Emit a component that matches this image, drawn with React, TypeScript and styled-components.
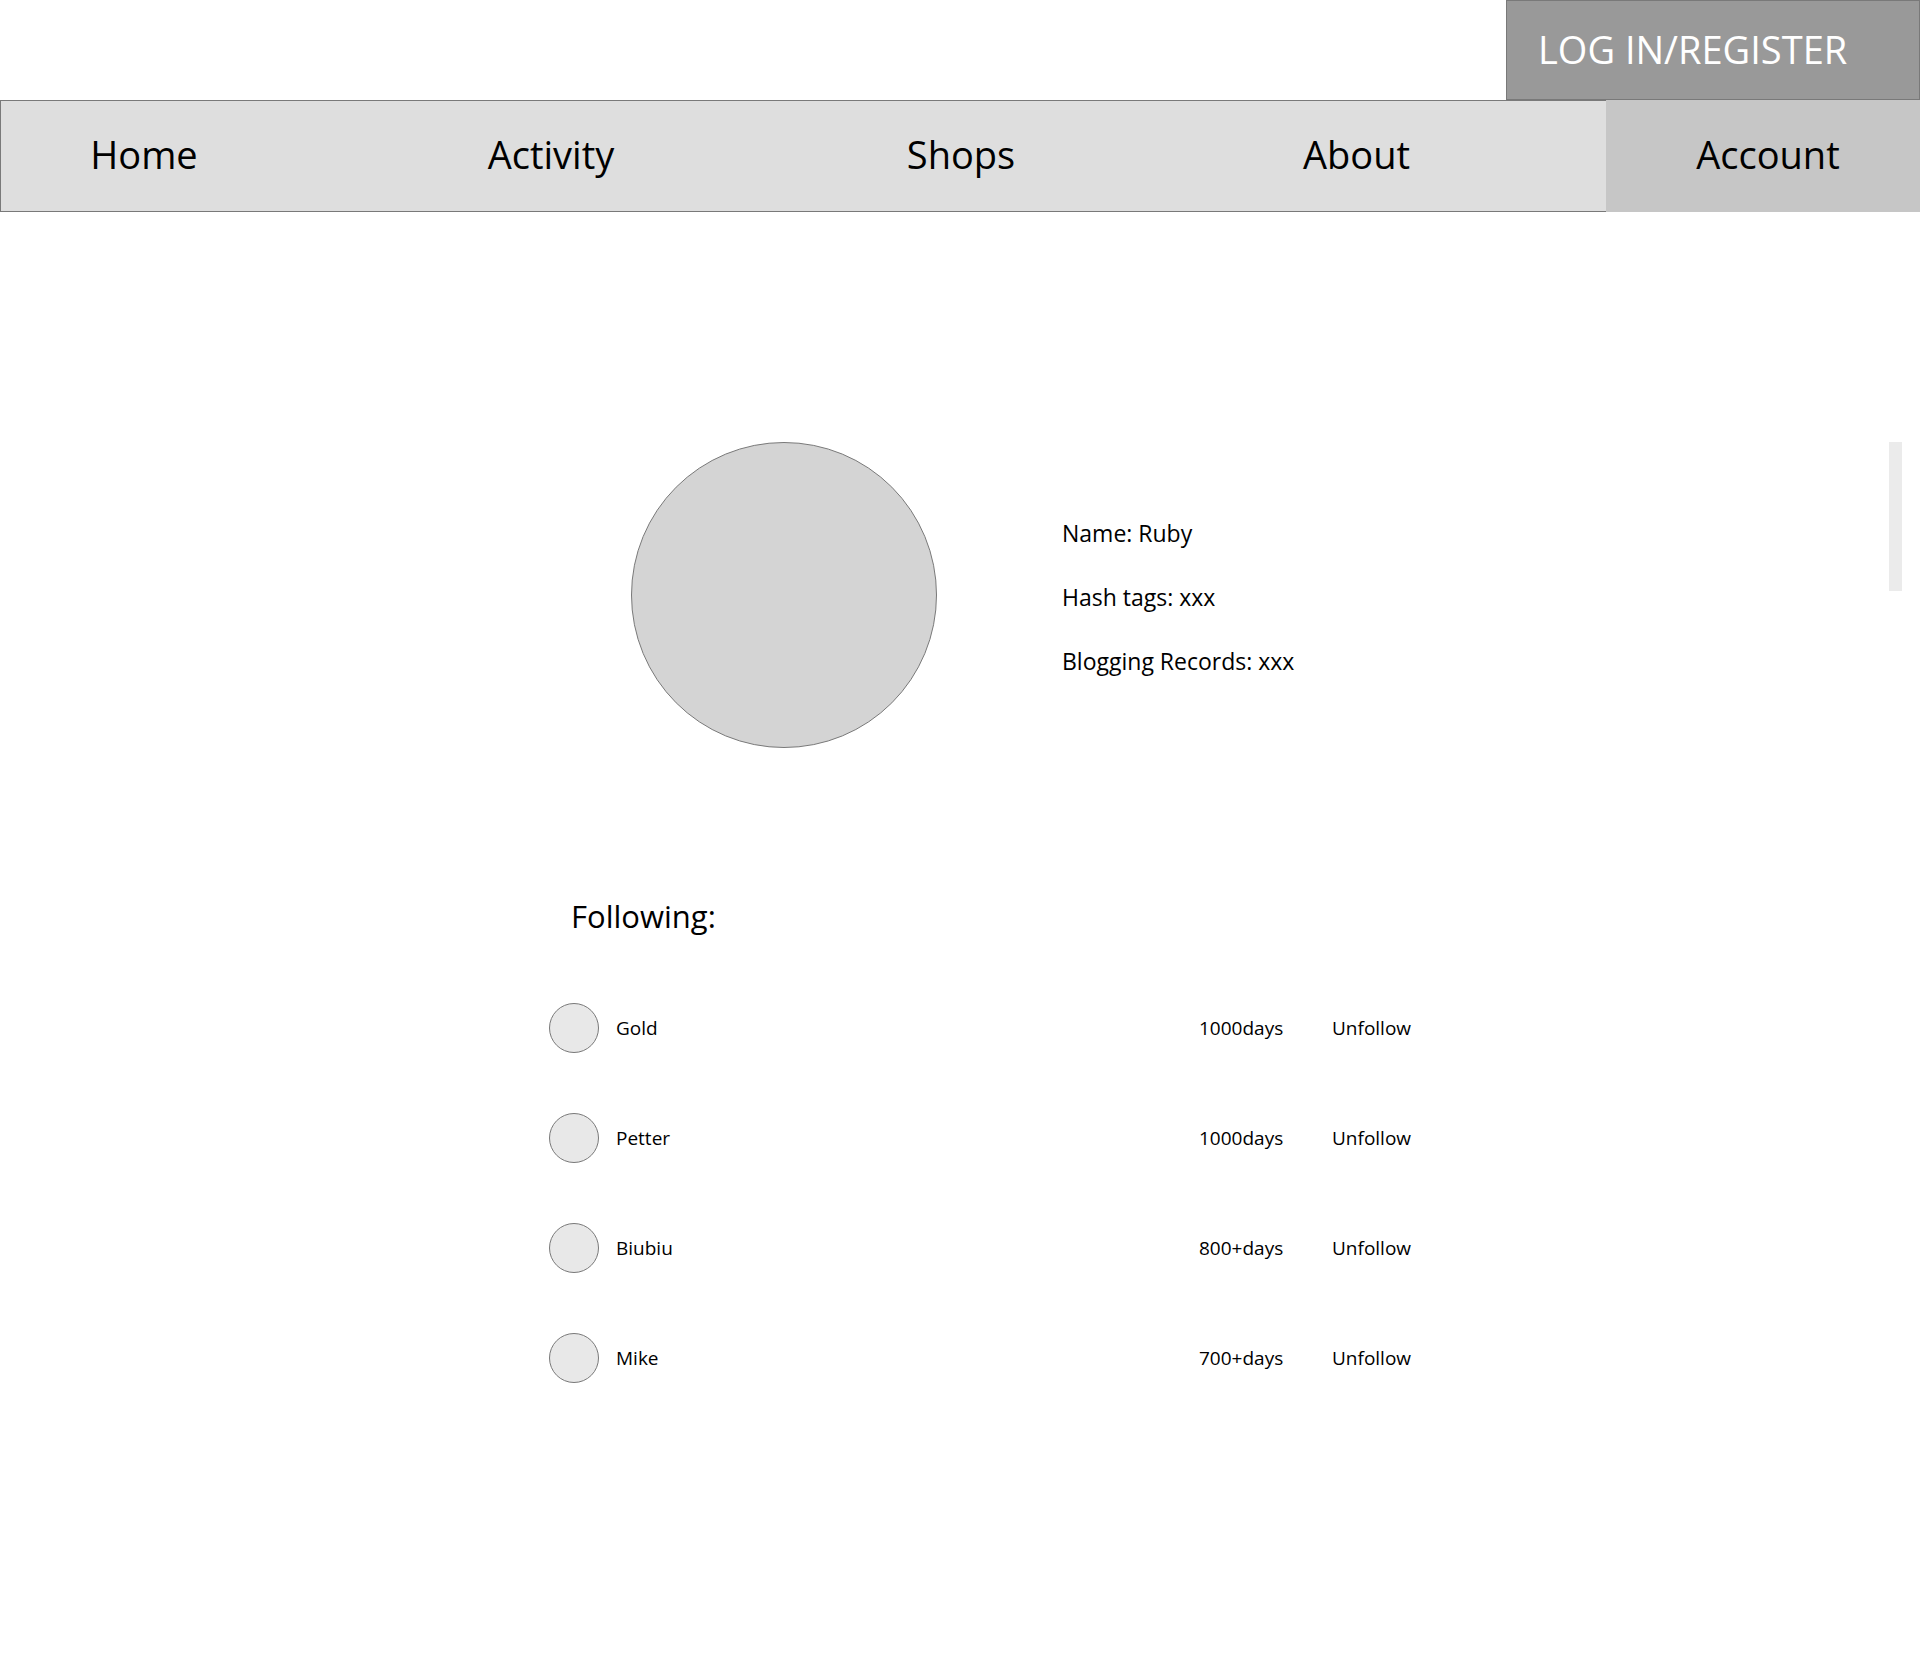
import React from "react";
import styled, { createGlobalStyle } from "styled-components";

const GlobalStyle = createGlobalStyle`
  html, body {
    margin: 0;
    padding: 0;
    background: #ffffff;
  }
  body {
    font-family: "Open Sans", "Noto Sans", sans-serif;
    color: #000;
  }
`;

const Page = styled.div`
  position: relative;
  width: 1920px;
  min-height: 1660px;
  background: #fff;
`;

const TopBar = styled.header`
  display: flex;
  justify-content: flex-end;
  height: 100px;
`;

const LoginButton = styled.button`
  width: 414px;
  height: 100px;
  box-sizing: border-box;
  border: 1px solid #797979;
  background: #999999;
  color: #ffffff;
  font-family: inherit;
  font-size: 38px;
  text-align: left;
  padding: 0 0 2px 31px;
  cursor: pointer;
`;

const NavBar = styled.nav`
  display: flex;
  height: 112px;
`;

const NavList = styled.div`
  flex: 1;
  display: flex;
  box-sizing: border-box;
  border: 1px solid #797979;
  border-right: none;
  background: #dedede;
`;

const NavItem = styled.a<{ $w: number }>`
  width: ${(p) => p.$w}px;
  display: flex;
  align-items: center;
  justify-content: center;
  font-size: 38px;
  color: #000;
  text-decoration: none;
  padding-bottom: 4px;
  box-sizing: border-box;
`;

const AccountTab = styled(NavItem)`
  background: #c6c6c6;
  padding-left: 10px;
`;

const Content = styled.main`
  padding-left: 549px;
`;

const Profile = styled.section`
  display: flex;
  align-items: center;
  gap: 125px;
  margin-top: 230px;
  padding-left: 82px;
`;

const BigAvatar = styled.div`
  width: 306px;
  height: 306px;
  box-sizing: border-box;
  border-radius: 50%;
  border: 1px solid #797979;
  background: #d4d4d4;
`;

const InfoList = styled.div`
  display: flex;
  flex-direction: column;
  gap: 35px;
  padding-top: 4px;
`;

const InfoLine = styled.div`
  font-size: 23px;
  line-height: 29px;
`;

const SectionTitle = styled.h2`
  margin: 148px 0 0 22px;
  font-size: 31px;
  font-weight: 400;
  line-height: 40px;
`;

const FollowList = styled.div`
  display: flex;
  flex-direction: column;
  gap: 60px;
  margin-top: 67px;
`;

const FollowRow = styled.div`
  display: grid;
  grid-template-columns: 50px 566px 116px auto;
  column-gap: 17px;
  align-items: center;
  height: 50px;
  font-size: 19px;
`;

const SmallAvatar = styled.div`
  width: 50px;
  height: 50px;
  box-sizing: border-box;
  border-radius: 50%;
  border: 1px solid #797979;
  background: #e8e8e8;
`;

const Unfollow = styled.span`
  cursor: pointer;
`;

const ScrollThumb = styled.div`
  position: absolute;
  left: 1889px;
  top: 442px;
  width: 13px;
  height: 149px;
  background: #ebebeb;
`;

const navItems = [
  { label: "Home", w: 286 },
  { label: "Activity", w: 528 },
  { label: "Shops", w: 292 },
  { label: "About", w: 499 },
];

const following = [
  { name: "Gold", days: "1000days" },
  { name: "Petter", days: "1000days" },
  { name: "Biubiu", days: "800+days" },
  { name: "Mike", days: "700+days" },
];

export default function App() {
  return (
    <Page>
      <GlobalStyle />
      <TopBar>
        <LoginButton>LOG IN/REGISTER</LoginButton>
      </TopBar>
      <NavBar>
        <NavList>
          {navItems.map((item) => (
            <NavItem key={item.label} $w={item.w} href="#">
              {item.label}
            </NavItem>
          ))}
        </NavList>
        <AccountTab $w={315} href="#">
          Account
        </AccountTab>
      </NavBar>
      <Content>
        <Profile>
          <BigAvatar />
          <InfoList>
            <InfoLine>Name: Ruby</InfoLine>
            <InfoLine>Hash tags: xxx</InfoLine>
            <InfoLine>Blogging Records: xxx</InfoLine>
          </InfoList>
        </Profile>
        <SectionTitle>Following:</SectionTitle>
        <FollowList>
          {following.map((f) => (
            <FollowRow key={f.name}>
              <SmallAvatar />
              <span>{f.name}</span>
              <span>{f.days}</span>
              <Unfollow>Unfollow</Unfollow>
            </FollowRow>
          ))}
        </FollowList>
      </Content>
      <ScrollThumb />
    </Page>
  );
}
